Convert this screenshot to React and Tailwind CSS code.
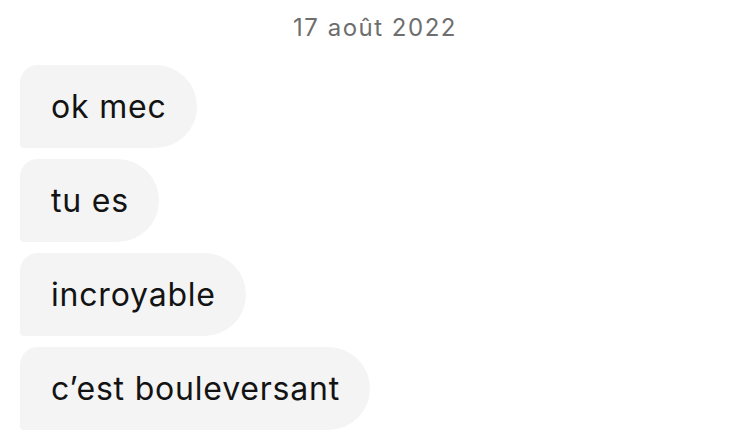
import React from 'react'

const messages = ['ok mec', 'tu es', 'incroyable', 'c\u2019est bouleversant']

function Bubble({ text }) {
  return (
    <div className="flex h-[83px] w-fit items-center rounded-tl-[18px] rounded-bl-[4px] rounded-r-[42px] bg-[#f4f4f4] pl-[31px] pr-[30px] text-[32px] tracking-[0.8px] text-[#131313]">
      {text}
    </div>
  )
}

export default function App() {
  return (
    <div className="h-[446px] w-[750px] overflow-hidden bg-white font-['Inter',sans-serif]">
      <div className="pt-3 text-center text-[24px] leading-[32px] tracking-[1.5px] text-[#6e6e6e]">17 août 2022</div>
      <div className="mt-[21px] flex flex-col gap-[11px] pl-5">
        {messages.map((m) => (
          <Bubble key={m} text={m} />
        ))}
      </div>
    </div>
  )
}
